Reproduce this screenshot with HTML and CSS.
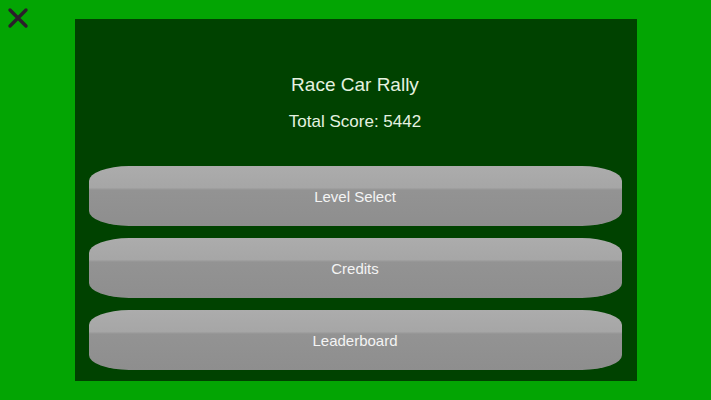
FILE: index.html
```html
<!DOCTYPE html>
<html lang="en">
<head>
    <meta charset="UTF-8">
    <meta name="viewport" content="width=device-width, initial-scale=1.0">
    <title>Race Car Rally</title>
    <link rel="stylesheet" href="styles.css">
</head>
<body>
    <button class="close-button" aria-label="Close">
        <svg width="22" height="22" viewBox="0 0 22 22">
            <path d="M3 3 L19 19 M19 3 L3 19" stroke="#2a1f2a" stroke-width="3.4" stroke-linecap="round"/>
        </svg>
    </button>

    <div class="menu">
        <h1 class="title">Race Car Rally</h1>
        <p class="score">Total Score: 5442</p>
        <div class="buttons">
            <button class="menu-button">Level Select</button>
            <button class="menu-button">Credits</button>
            <button class="menu-button">Leaderboard</button>
        </div>
    </div>
</body>
</html>
```

FILE: styles.css
```css
body {
    margin: 0;
    height: 100vh;
    background-color: #03a503;
    display: flex;
    justify-content: center;
    align-items: center;
    font-family: 'Liberation Sans', Arial, sans-serif;
    overflow: hidden;
}

.close-button {
    position: absolute;
    top: 7px;
    left: 7px;
    padding: 0;
    border: none;
    background: none;
    cursor: pointer;
}

.close-button svg {
    display: block;
}

.menu {
    width: 562px;
    height: 362px;
    box-sizing: border-box;
    background-color: #004200;
    padding: 54px 15px 11px 14px;
    display: flex;
    flex-direction: column;
    text-align: center;
}

.title {
    margin: 0;
    font-size: 19px;
    font-weight: normal;
    line-height: 24px;
    color: #e6f2e0;
}

.score {
    margin: 13px 0 0;
    font-size: 17px;
    line-height: 24px;
    color: #e6f2e0;
}

.buttons {
    margin-top: auto;
    display: flex;
    flex-direction: column;
    gap: 12px;
}

.menu-button {
    height: 60px;
    border: none;
    border-radius: 40px / 15px;
    background: linear-gradient(#acacac 0%, #a6a6a6 36%, #939393 40%, #8e8e8e 100%);
    color: #f4f4f4;
    font-family: 'Liberation Sans', Arial, sans-serif;
    font-size: 15px;
    cursor: pointer;
}
```
